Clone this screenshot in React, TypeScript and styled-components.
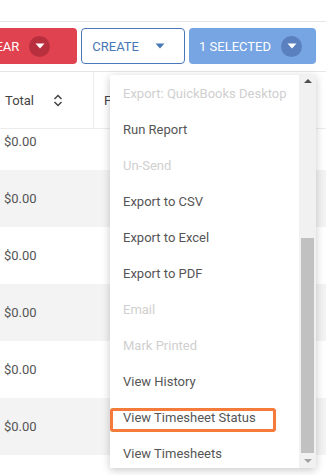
import React from "react";
import styled, { createGlobalStyle } from "styled-components";

const GlobalStyle = createGlobalStyle`
  html, body { margin: 0; padding: 0; background: #fff; }
  body { font-family: Roboto, "Liberation Sans", Arial, sans-serif; overflow: hidden; }
  * { box-sizing: border-box; }
`;

const Page = styled.div`
  position: relative;
  width: 326px;
  height: 475px;
  overflow: hidden;
  display: flex;
  flex-direction: column;
  background: #fff;
`;

const TopStrip = styled.div`
  height: 22px;
  flex: none;
  border-bottom: 1px solid #e6e6e6;
`;

const Toolbar = styled.div`
  flex: none;
  display: flex;
  justify-content: flex-end;
  align-items: center;
  gap: 4px;
  padding: 6px 10px 7px 0;
  border-bottom: 1px solid #e6e6e6;
  white-space: nowrap;
`;

const Button = styled.div<{ $variant: "red" | "outline" | "blue" }>`
  flex: none;
  height: 36px;
  display: flex;
  align-items: center;
  gap: 10px;
  border-radius: 4px;
  font-size: 13px;
  padding: 0 ${(p) => (p.$variant === "red" ? 27 : 14)}px 0 10px;
  background: ${(p) =>
    p.$variant === "red" ? "#e0424f" : p.$variant === "blue" ? "#77a4e2" : "#fff"};
  color: ${(p) => (p.$variant === "outline" ? "#4a77b6" : "#fff")};
  border: ${(p) => (p.$variant === "outline" ? "1px solid #4a77b6" : "none")};
`;

const Caret = styled.span<{ $bg: string }>`
  width: 21px;
  height: 21px;
  border-radius: 50%;
  background: ${(p) => p.$bg};
  display: flex;
  align-items: center;
  justify-content: center;
`;

const CaretSvg = ({ color }: { color: string }) => (
  <svg width="10" height="6" viewBox="0 0 10 6">
    <path d="M0.5 0.5 L9.5 0.5 L5 5.5 Z" fill={color} />
  </svg>
);

const HeaderRow = styled.div`
  flex: none;
  height: 57px;
  display: flex;
  border-bottom: 1px solid #ececec;
  font-size: 13px;
  color: #444;
`;

const HeaderCell = styled.div<{ $w?: number; $divider?: boolean }>`
  width: ${(p) => (p.$w ? `${p.$w}px` : "auto")};
  flex: ${(p) => (p.$w ? "none" : "1")};
  display: flex;
  align-items: center;
  gap: 19px;
  padding-left: ${(p) => (p.$divider ? 5 : 10)}px;
  border-right: ${(p) => (p.$divider ? "1px solid #ececec" : "none")};
`;

const Body = styled.div`
  flex: 1;
  overflow: hidden;
`;

const BodyInner = styled.div`
  margin-top: -16px;
`;

const Row = styled.div<{ $alt: boolean }>`
  height: 57px;
  display: flex;
  align-items: center;
  padding-left: 4px;
  font-size: 13px;
  color: #555;
  background: ${(p) => (p.$alt ? "#f3f3f3" : "#fff")};
`;

const Menu = styled.div`
  position: absolute;
  left: 110px;
  top: 75px;
  width: 206px;
  height: 393px;
  display: flex;
  background: #fff;
  box-shadow: 0 2px 8px rgba(0, 0, 0, 0.22);
  z-index: 5;
`;

const MenuList = styled.div`
  flex: 1;
  overflow: hidden;
`;

const MenuItem = styled.div<{ $disabled?: boolean }>`
  height: 36px;
  display: flex;
  align-items: center;
  padding-left: 13px;
  font-size: 13px;
  white-space: nowrap;
  color: ${(p) => (p.$disabled ? "#cfcfcf" : "#555")};
`;

const Scrollbar = styled.div`
  width: 17px;
  flex: none;
  display: flex;
  flex-direction: column;
  background: #f1f1f1;
`;

const ScrollButton = styled.div<{ $h: number }>`
  height: ${(p) => p.$h}px;
  flex: none;
  display: flex;
  justify-content: center;
  align-items: center;
`;

const Track = styled.div`
  flex: 1;
  display: flex;
  flex-direction: column;
  justify-content: flex-end;
  padding: 0 2px;
`;

const Thumb = styled.div`
  height: 215px;
  background: #c1c1c1;
`;

const Highlight = styled.div`
  position: absolute;
  left: 110px;
  top: 408px;
  width: 166px;
  height: 24px;
  border: 3px solid #f47b3a;
  border-radius: 3px;
  z-index: 6;
`;

const items: { label: string; disabled?: boolean }[] = [
  { label: "Export: QuickBooks Desktop", disabled: true },
  { label: "Run Report" },
  { label: "Un-Send", disabled: true },
  { label: "Export to CSV" },
  { label: "Export to Excel" },
  { label: "Export to PDF" },
  { label: "Email", disabled: true },
  { label: "Mark Printed", disabled: true },
  { label: "View History" },
  { label: "View Timesheet Status" },
  { label: "View Timesheets" },
];

export default function App() {
  return (
    <Page>
      <GlobalStyle />
      <TopStrip />
      <Toolbar>
        <Button $variant="red">
          CLEAR
          <Caret $bg="#b8303e">
            <CaretSvg color="#fff" />
          </Caret>
        </Button>
        <Button $variant="outline">
          CREATE
          <Caret $bg="transparent">
            <CaretSvg color="#4a77b6" />
          </Caret>
        </Button>
        <Button $variant="blue">
          1 SELECTED
          <Caret $bg="#5b80bf">
            <CaretSvg color="#fff" />
          </Caret>
        </Button>
      </Toolbar>
      <HeaderRow>
        <HeaderCell $w={94} $divider>
          Total
          <svg width="10" height="13" viewBox="0 0 10 13">
            <path d="M1.5 5 L5 1.5 L8.5 5 M1.5 8 L5 11.5 L8.5 8" fill="none" stroke="#444" strokeWidth="1.5" />
          </svg>
        </HeaderCell>
        <HeaderCell>Fees</HeaderCell>
      </HeaderRow>
      <Body>
        <BodyInner>
          {[0, 1, 2, 3, 4, 5, 6].map((i) => (
            <Row key={i} $alt={i % 2 === 1}>
              $0.00
            </Row>
          ))}
        </BodyInner>
      </Body>
      <Menu>
        <MenuList>
          {items.map((it) => (
            <MenuItem key={it.label} $disabled={it.disabled}>
              {it.label}
            </MenuItem>
          ))}
        </MenuList>
        <Scrollbar>
          <ScrollButton $h={12}>
            <svg width="8" height="4" viewBox="0 0 8 4">
              <path d="M0 4 L8 4 L4 0 Z" fill="#505050" />
            </svg>
          </ScrollButton>
          <Track>
            <Thumb />
          </Track>
          <ScrollButton $h={15}>
            <svg width="8" height="4" viewBox="0 0 8 4">
              <path d="M0 0 L8 0 L4 4 Z" fill="#a3a3a3" />
            </svg>
          </ScrollButton>
        </Scrollbar>
      </Menu>
      <Highlight />
    </Page>
  );
}
